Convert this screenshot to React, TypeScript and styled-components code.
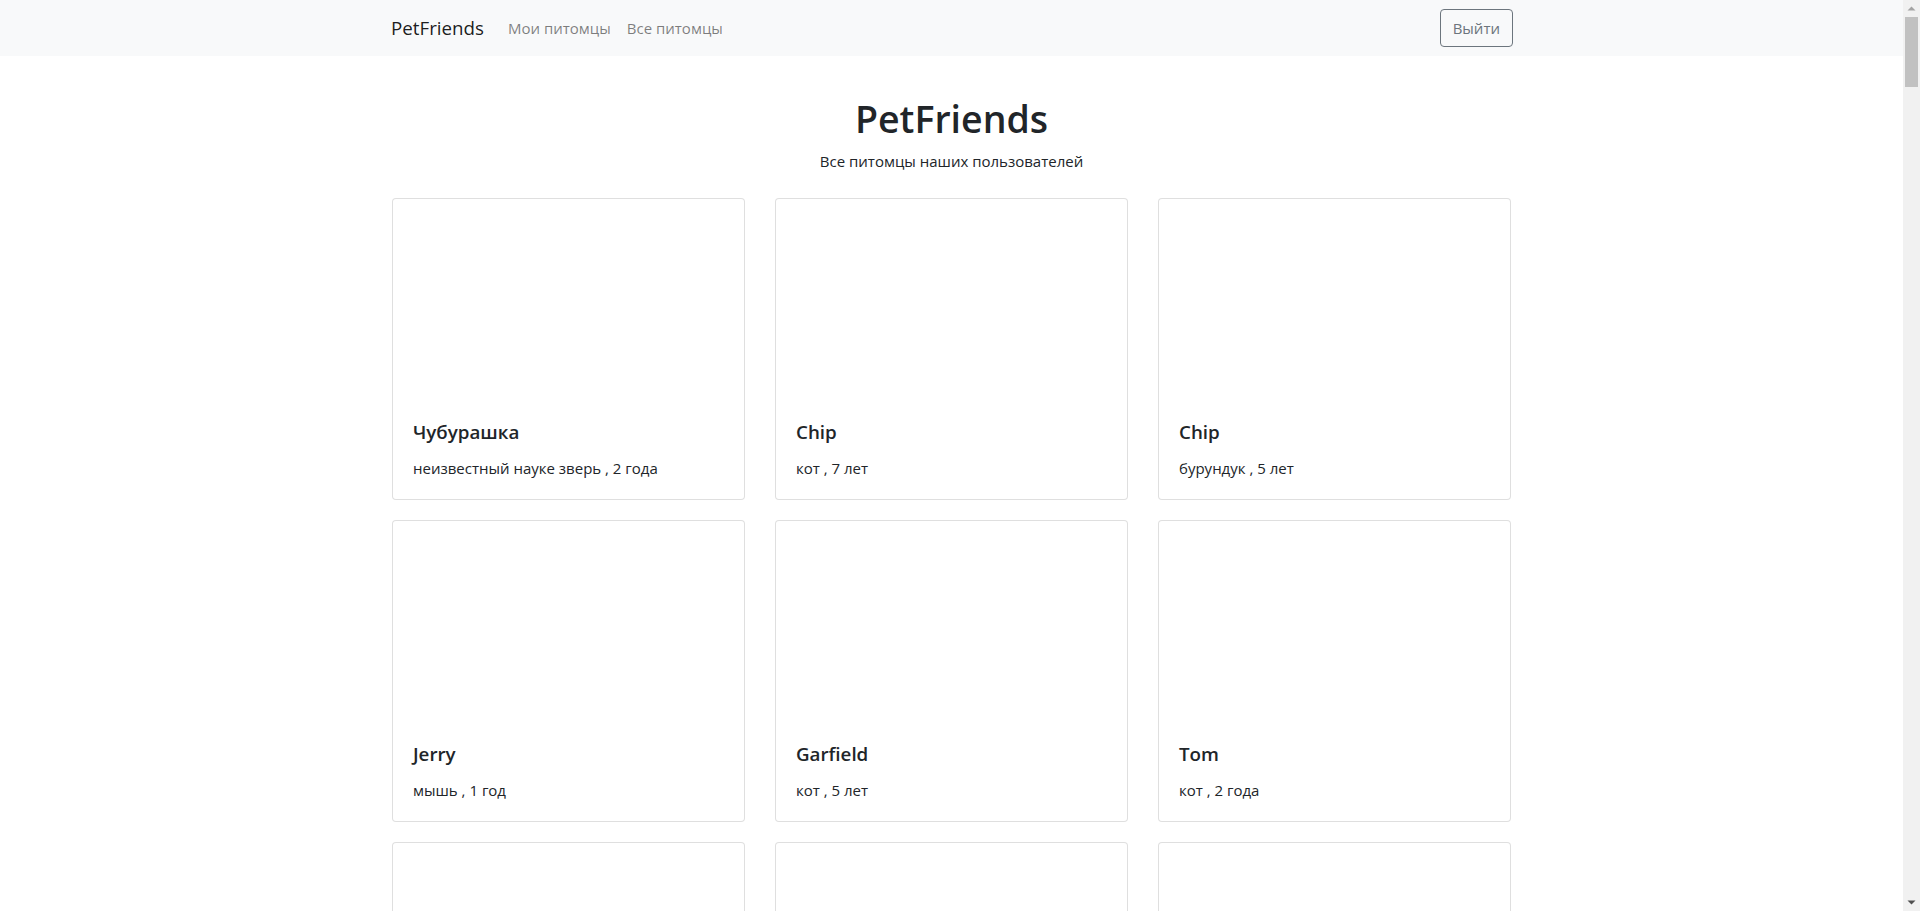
import React from "react";
import styled, { createGlobalStyle } from "styled-components";

const GlobalStyle = createGlobalStyle`
  html, body {
    margin: 0;
    padding: 0;
    background: #ffffff;
  }
  body {
    font-family: "Open Sans", "Noto Sans", Arial, sans-serif;
    font-size: 15px;
    line-height: 24px;
    color: #212529;
  }
  * { box-sizing: border-box; }
`;

const Page = styled.div`
  padding-right: 17px;
`;

/* Browser scrollbar, drawn over the right edge as in the reference */
const ScrollTrack = styled.div`
  position: fixed;
  top: 0;
  right: 0;
  bottom: 0;
  width: 17px;
  background: #f1f1f1;
  display: flex;
  flex-direction: column;
`;

const ScrollButton = styled.div`
  height: 17px;
  display: flex;
  align-items: center;
  justify-content: center;
  flex-shrink: 0;
`;

const ScrollThumb = styled.div`
  height: 70px;
  margin: 0 2px;
  background: #c1c1c1;
`;

const ScrollSpacer = styled.div`
  flex: 1;
`;

const Navbar = styled.nav`
  background: #f8f9fa;
  height: 56px;
`;

const NavInner = styled.div`
  max-width: 1123px;
  height: 100%;
  margin: 0 auto;
  display: flex;
  align-items: center;
`;

const Brand = styled.a`
  font-size: 18.75px;
  line-height: 30px;
  color: rgba(0, 0, 0, 0.9);
  text-decoration: none;
  margin-right: 16px;
  padding-left: 1px;
`;

const NavLink = styled.a`
  font-size: 15px;
  line-height: 24px;
  padding: 8px 8px;
  color: rgba(0, 0, 0, 0.5);
  text-decoration: none;
`;

const LogoutButton = styled.button`
  margin-left: auto;
  height: 38px;
  padding: 6px 12px;
  font-family: inherit;
  font-size: 15px;
  line-height: 24px;
  color: #6c757d;
  background: transparent;
  border: 1px solid #6c757d;
  border-radius: 4px;
  cursor: pointer;
`;

const Main = styled.main`
  width: 1119px;
  margin: 0 auto;
  padding-bottom: 40px;
`;

const Header = styled.header`
  text-align: center;
  padding-top: 39px;
`;

const Title = styled.h1`
  margin: 0 0 6px;
  font-size: 37.5px;
  line-height: 48px;
  font-weight: 600;
  color: #212529;
`;

const Subtitle = styled.p`
  margin: 0;
  font-size: 15px;
  line-height: 24px;
`;

const Grid = styled.div`
  margin-top: 25px;
  display: grid;
  grid-template-columns: repeat(3, 353px);
  column-gap: 30px;
  row-gap: 20px;
`;

const Card = styled.div`
  display: flex;
  flex-direction: column;
  background: #fff;
  border: 1px solid rgba(0, 0, 0, 0.125);
  border-radius: 4px;
`;

const CardImage = styled.div`
  height: 200px;
`;

const CardBody = styled.div`
  padding: 21px 20px 19px;
`;

const CardTitle = styled.h5`
  margin: 0 0 12px;
  font-size: 18.75px;
  line-height: 24px;
  font-weight: 600;
  color: #212529;
`;

const CardText = styled.p`
  margin: 0;
  font-size: 15px;
  line-height: 24px;
  color: #212529;
`;

type Pet = { name: string; type: string; age: string };

const pets: Pet[] = [
  { name: "Чубурашка", type: "неизвестный науке зверь", age: "2 года" },
  { name: "Chip", type: "кот", age: "7 лет" },
  { name: "Chip", type: "бурундук", age: "5 лет" },
  { name: "Jerry", type: "мышь", age: "1 год" },
  { name: "Garfield", type: "кот", age: "5 лет" },
  { name: "Tom", type: "кот", age: "2 года" },
  { name: "Барсик", type: "кот", age: "3 года" },
  { name: "Шарик", type: "собака", age: "4 года" },
  { name: "Кеша", type: "попугай", age: "2 года" },
];

const Arrow = ({ up }: { up: boolean }) => (
  <svg width="9" height="5" viewBox="0 0 9 5">
    <polygon
      points={up ? "0.5,4.5 8.5,4.5 4.5,0.5" : "0.5,0.5 8.5,0.5 4.5,4.5"}
      fill={up ? "#a3a3a3" : "#505050"}
    />
  </svg>
);

export default function App() {
  return (
    <Page>
      <GlobalStyle />
      <Navbar>
        <NavInner>
          <Brand href="#">PetFriends</Brand>
          <NavLink href="#">Мои питомцы</NavLink>
          <NavLink href="#">Все питомцы</NavLink>
          <LogoutButton type="button">Выйти</LogoutButton>
        </NavInner>
      </Navbar>
      <Main>
        <Header>
          <Title>PetFriends</Title>
          <Subtitle>Все питомцы наших пользователей</Subtitle>
        </Header>
        <Grid>
          {pets.map((pet, i) => (
            <Card key={i}>
              <CardImage />
              <CardBody>
                <CardTitle>{pet.name}</CardTitle>
                <CardText>
                  {pet.type} , {pet.age}
                </CardText>
              </CardBody>
            </Card>
          ))}
        </Grid>
      </Main>
      <ScrollTrack>
        <ScrollButton>
          <Arrow up />
        </ScrollButton>
        <ScrollThumb />
        <ScrollSpacer />
        <ScrollButton>
          <Arrow up={false} />
        </ScrollButton>
      </ScrollTrack>
    </Page>
  );
}
